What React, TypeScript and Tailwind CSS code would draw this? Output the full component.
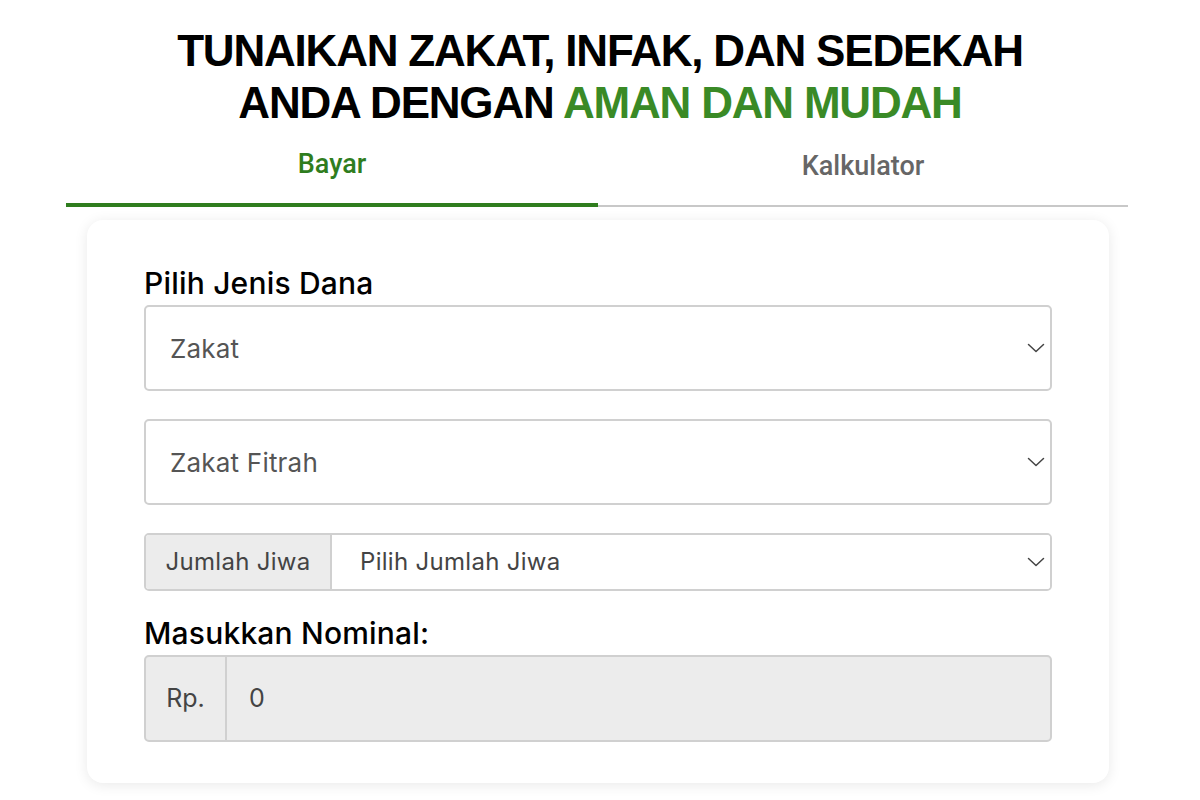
const selectClass =
  'w-full flex items-center justify-between border-2 border-[#d0d0d0] rounded-[5px] bg-white text-[#555] pl-6 pr-[5px] h-[86px] text-[26px] tracking-[0.2px]';

function Chevron() {
  return (
    <svg width="18" height="10" viewBox="0 0 18 10" fill="none" className="text-[#444]">
      <path d="M1.5 1.5 L9 8.5 L16.5 1.5" stroke="currentColor" strokeWidth="1.5" strokeLinecap="round" strokeLinejoin="round" />
    </svg>
  );
}

function App() {
  return (
    <div className="min-h-screen bg-white font-['Inter',sans-serif]">
      {/* HEADING */}
      <h1 className="pt-[25px] text-center font-['Liberation_Sans',Arial,sans-serif] font-bold text-[44px] leading-[52px] text-black tracking-[-1.2px]">
        TUNAIKAN ZAKAT, INFAK, DAN SEDEKAH
        <br />
        ANDA DENGAN <span className="text-[#3a8a26]">AMAN DAN MUDAH</span>
      </h1>

      {/* TABS */}
      <div className="ml-[66px] mr-[72px] mt-[16px] flex font-['Roboto',sans-serif] text-[27px] font-medium">
        <button className="w-[532px] h-[62px] flex items-start justify-center text-[#2f7d1e] border-b-[4px] border-[#2f7d1e]">
          <span className="mt-[-1px]">Bayar</span>
        </button>
        <button className="flex-1 h-[62px] flex items-start justify-center text-[#666] border-b-2 border-[#c8c8c8]">
          <span className="mt-[1px]">Kalkulator</span>
        </button>
      </div>

      {/* CARD */}
      <div className="mx-[87px] w-[1022px] mt-[13px] rounded-[16px] bg-white shadow-[0_2px_14px_rgba(0,0,0,0.09)] px-[57px] pt-[43px] pb-[41px]">
        <label className="block text-[30px] font-medium text-black leading-[40px] mb-[2px] tracking-[0.2px]">
          Pilih Jenis Dana
        </label>
        <div className={selectClass}>
          <span>Zakat</span>
          <Chevron />
        </div>

        <div className={selectClass + ' mt-[28px]'}>
          <span>Zakat Fitrah</span>
          <Chevron />
        </div>

        <div className="mt-[28px] flex h-[58px] border-2 border-[#d0d0d0] rounded-[5px] overflow-hidden text-[24px] text-[#444] tracking-[0.3px]">
          <div className="w-[186px] bg-[#ececec] border-r-2 border-[#d0d0d0] flex items-center justify-center">
            Jumlah Jiwa
          </div>
          <div className="flex-1 flex items-center justify-between pl-[28px] pr-[5px] bg-white">
            <span>Pilih Jumlah Jiwa</span>
            <Chevron />
          </div>
        </div>

        <label className="block mt-[22px] text-[30px] font-medium text-black leading-[40px] mb-[2px] tracking-[0.2px]">
          Masukkan Nominal:
        </label>
        <div className="flex h-[87px] border-2 border-[#d0d0d0] rounded-[5px] overflow-hidden text-[25px] text-[#444] bg-[#ececec]">
          <div className="w-[81px] border-r-2 border-[#d0d0d0] flex items-center justify-center">Rp.</div>
          <div className="flex-1 flex items-center pl-[22px]">0</div>
        </div>
      </div>
    </div>
  );
}

export default App;
